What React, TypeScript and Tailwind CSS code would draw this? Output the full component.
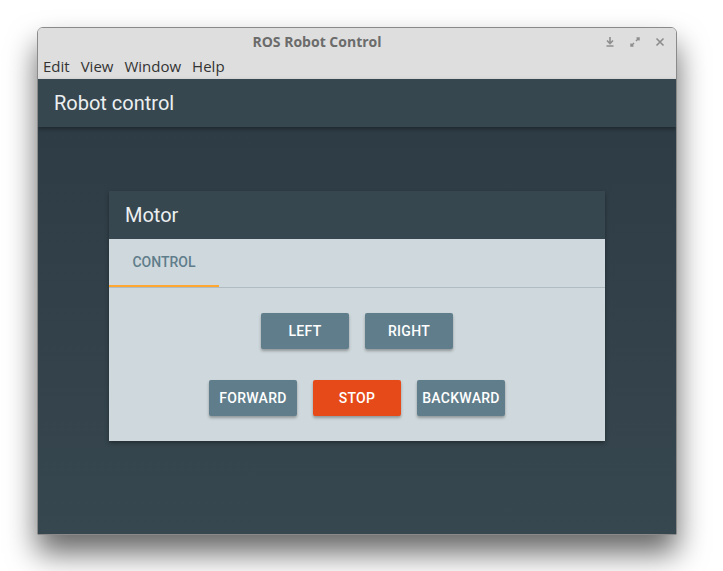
import React from "react";

export default function App() {
  const btn =
    "w-[88px] h-9 rounded-[2px] bg-[#607d8b] text-white text-[14px] font-medium tracking-[0.02em] shadow-[0_2px_3px_rgba(0,0,0,0.3)] flex items-center justify-center";
  return (
    <div className="w-[723px] h-[571px] bg-white pl-[37px] pt-[27px] overflow-hidden" style={{ fontFamily: "Roboto, sans-serif" }}>
      <div className="w-[640px] h-[508px] flex flex-col rounded-t-[6px] border border-[#8a8a8a] shadow-[0_18px_30px_rgba(0,0,0,0.6)] overflow-hidden">
        {/* title bar */}
        <div className="h-[26px] bg-[#dedede] relative flex items-center justify-center shrink-0">
          <span className="text-[14px] font-bold text-[#6b6b6b] ml-[-80px]" style={{ fontFamily: "'Open Sans', sans-serif" }}>
            ROS Robot Control
          </span>
          <div className="absolute right-[10px] top-[8px] flex items-center gap-[13px] text-[#8e8e8e]">
            <svg width="12" height="12" viewBox="0 0 12 12">
              <path d="M6 1v6M3 4.5L6 7.5 9 4.5M2.5 10h7" stroke="#8e8e8e" strokeWidth="1.6" fill="none" />
            </svg>
            <svg width="12" height="12" viewBox="0 0 12 12">
              <path d="M7 5L10 2M7.5 2H10V4.5M5 7L2 10M2 7.5V10H4.5" stroke="#8e8e8e" strokeWidth="1.5" fill="none" />
            </svg>
            <svg width="12" height="12" viewBox="0 0 12 12">
              <path d="M2.5 2.5L9.5 9.5M9.5 2.5L2.5 9.5" stroke="#8e8e8e" strokeWidth="1.7" fill="none" />
            </svg>
          </div>
        </div>
        {/* menu bar */}
        <div className="h-[25px] bg-[#dedede] flex items-center gap-[11px] pl-[5px] text-[15px] text-[#333] shrink-0" style={{ fontFamily: "'Open Sans', sans-serif" }}>
          <span>Edit</span>
          <span>View</span>
          <span>Window</span>
          <span>Help</span>
        </div>
        {/* app bar */}
        <div className="h-[48px] bg-[#37474f] flex items-center pl-[16px] text-[20px] text-[#eceff1] shadow-[0_2px_4px_rgba(0,0,0,0.35)] relative z-10 shrink-0">
          Robot control
        </div>
        {/* content */}
        <div className="flex-1 bg-gradient-to-b from-[#2e3c45] to-[#37474f] pt-[64px] px-[71px]">
          <div className="w-[496px] shadow-[0_2px_4px_rgba(0,0,0,0.35)]">
            <div className="h-[48px] bg-[#37474f] flex items-center pl-[16px] text-[20px] text-[#eceff1]">Motor</div>
            <div className="bg-[#cfd8dc]">
              <div className="h-[49px] border-b border-[#b0bcc1] flex">
                <div className="w-[110px] h-full flex items-center justify-center text-[14px] font-medium text-[#607d8b] border-b-2 border-[#ffa733] mb-[-1px]">
                  CONTROL
                </div>
              </div>
              <div className="pt-[25px] pb-[25px] flex flex-col items-center gap-[31px]">
                <div className="flex gap-4">
                  <div className={btn}>LEFT</div>
                  <div className={btn}>RIGHT</div>
                </div>
                <div className="flex gap-4">
                  <div className={btn}>FORWARD</div>
                  <div className={btn + " !bg-[#e64a19]"}>STOP</div>
                  <div className={btn}>BACKWARD</div>
                </div>
              </div>
            </div>
          </div>
        </div>
      </div>
    </div>
  );
}
